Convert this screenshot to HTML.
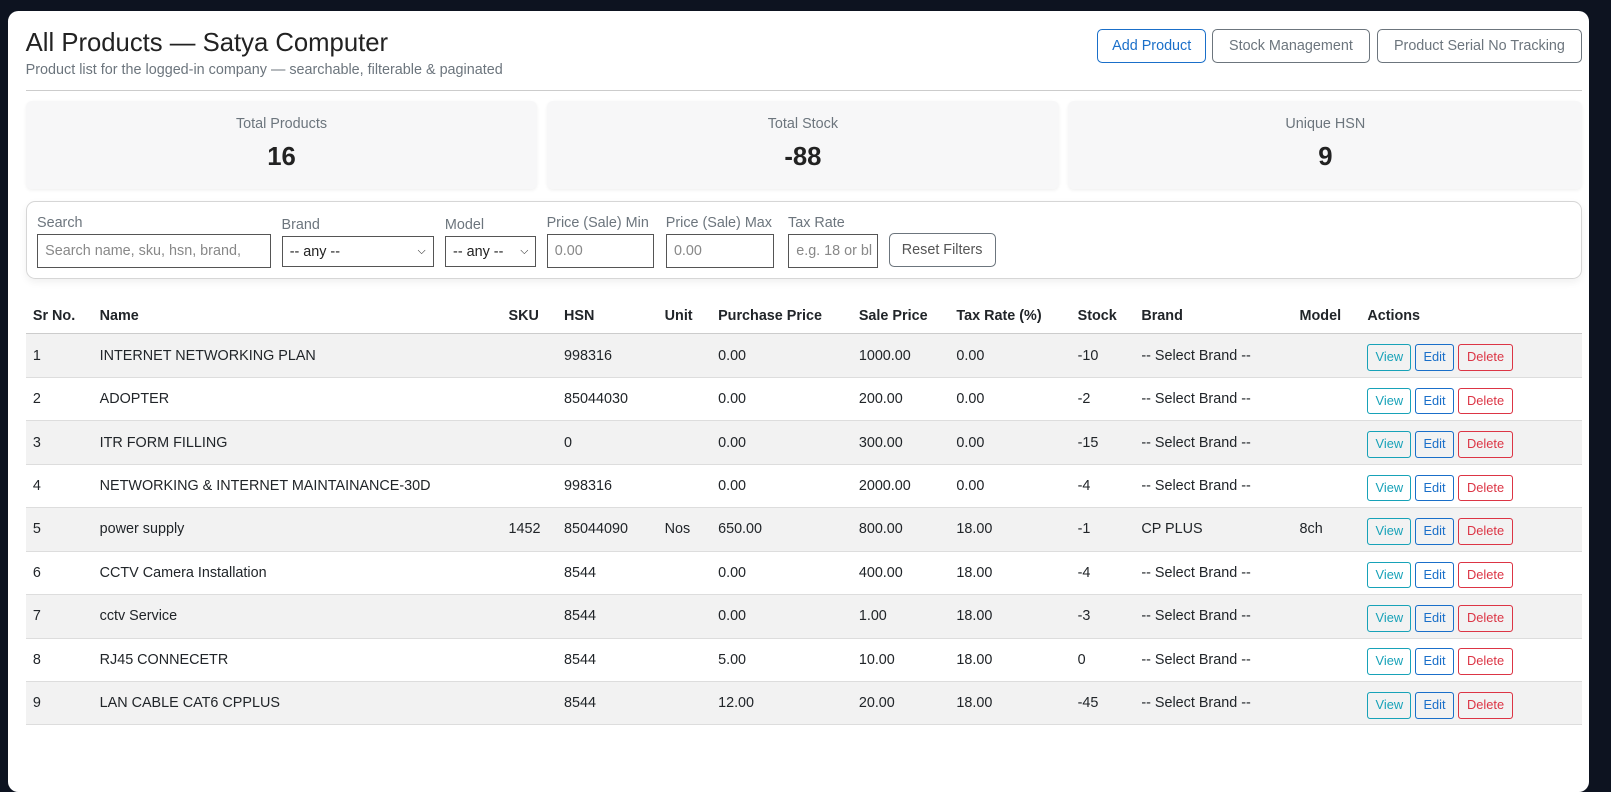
<!DOCTYPE html>
<html><head><meta charset="utf-8"><style>
*{box-sizing:border-box;margin:0;padding:0}
body{width:1611px;height:726px;background:#0d1320;font-family:"Liberation Sans",sans-serif;overflow:hidden;position:relative;color:#212529}
#w{position:absolute;left:0;top:0;width:1568px;height:707px;zoom:1.0274}
.card{position:absolute;left:8px;top:11px;width:1539px;height:760px;background:#fff;border-radius:10px}
.abs{position:absolute}
h1{position:absolute;left:25px;top:28px;font-size:25px;font-weight:400;color:#222}
.sub{left:25px;top:60px;font-size:14px;color:#6c757d}
.btn{position:absolute;top:28px;height:33px;border:1px solid #6c757d;border-radius:5px;font-size:14px;color:#6c757d;display:flex;align-items:center;justify-content:center;background:#fff}
hr{position:absolute;left:25px;top:88px;width:1515px;border:0;border-top:1px solid #ccc}
.stat{position:absolute;top:98px;height:86px;background:#f7f7f8;border-radius:6px;text-align:center;box-shadow:0 1px 3px rgba(0,0,0,.06)}
.stat .l{margin-top:15px;font-size:14px;color:#6c757d}
.stat .v{margin-top:11px;font-size:25px;font-weight:700;color:#222}
.filt{position:absolute;left:25px;top:196px;width:1515px;height:76px;border:1px solid #d6d6d6;border-radius:9px;box-shadow:0 3px 8px rgba(0,0,0,.06)}
.lab{position:absolute;font-size:14px;color:#6c757d}
.in{position:absolute;top:228px;height:33px;border:1px solid #555;font-size:14px;color:#888;padding:0 7px;display:flex;align-items:center;background:#fff}
.sel{color:#222;justify-content:space-between}
table{position:absolute;left:25px;top:290px;width:1515px;border-collapse:collapse;font-size:14px}
th{text-align:left;font-weight:700;height:35px;padding:0 7px;border-bottom:1px solid #ccc}
td{height:42.3px;padding:0 7px;border-bottom:1px solid #ddd;white-space:nowrap}
tr:nth-child(even) td{background:#f2f2f2}
.b{display:inline-block;height:26px;line-height:24px;border:1px solid;border-radius:3px;font-size:12.5px;padding:0 7px;margin-right:0;margin-top:4px}
.v1{color:#17a2b8;border-color:#17a2b8}.e1{color:#1a6fc9;border-color:#1a6fc9}.d1{color:#dc3545;border-color:#dc3545;padding:0 8px}
</style></head><body><div id="w">
<div class="card"></div>
<h1>All Products — Satya Computer</h1>
<div class="abs sub">Product list for the logged-in company — searchable, filterable &amp; paginated</div>
<div class="btn" style="left:1068px;width:106px;color:#1a6fc9;border-color:#1a6fc9">Add Product</div>
<div class="btn" style="left:1180px;width:153px">Stock Management</div>
<div class="btn" style="left:1340px;width:200px">Product Serial No Tracking</div>
<hr>
<div class="stat" style="left:25px;width:498px"><div class="l">Total Products</div><div class="v">16</div></div>
<div class="stat" style="left:532px;width:499px"><div class="l">Total Stock</div><div class="v">-88</div></div>
<div class="stat" style="left:1040px;width:500px"><div class="l">Unique HSN</div><div class="v">9</div></div>
<div class="filt"></div>
<div class="lab" style="left:36px;top:209px">Search</div>
<div class="lab" style="left:274px;top:211px">Brand</div>
<div class="lab" style="left:433px;top:211px">Model</div>
<div class="lab" style="left:532px;top:209px">Price (Sale) Min</div>
<div class="lab" style="left:648px;top:209px">Price (Sale) Max</div>
<div class="lab" style="left:767px;top:209px">Tax Rate</div>
<div class="in" style="left:36px;width:228px">Search name, sku, hsn, brand,</div>
<div class="in sel" style="left:274px;width:148px;top:230px;height:30px"><span>-- any --</span><span style="font-size:10px">&#9013;</span></div>
<div class="in sel" style="left:433px;width:89px;top:230px;height:30px"><span>-- any --</span><span style="font-size:10px">&#9013;</span></div>
<div class="in" style="left:532px;width:105px">0.00</div>
<div class="in" style="left:648px;width:105px">0.00</div>
<div class="in" style="left:767px;width:88px;overflow:hidden;white-space:nowrap">e.g. 18 or bl</div>
<div class="btn" style="left:865px;top:227px;width:104px;height:33px;color:#555">Reset Filters</div>
<table>
<tr><th style="width:65px">Sr No.</th><th style="width:398px">Name</th><th style="width:54px">SKU</th><th style="width:98px">HSN</th><th style="width:52px">Unit</th><th style="width:137px">Purchase Price</th><th style="width:95px">Sale Price</th><th style="width:118px">Tax Rate (%)</th><th style="width:62px">Stock</th><th style="width:154px">Brand</th><th style="width:66px">Model</th><th>Actions</th></tr>
<tr><td>1</td><td>INTERNET NETWORKING PLAN</td><td></td><td>998316</td><td></td><td>0.00</td><td>1000.00</td><td>0.00</td><td>-10</td><td>-- Select Brand --</td><td></td><td><span class="b v1">View</span> <span class="b e1">Edit</span> <span class="b d1">Delete</span></td></tr>
<tr><td>2</td><td>ADOPTER</td><td></td><td>85044030</td><td></td><td>0.00</td><td>200.00</td><td>0.00</td><td>-2</td><td>-- Select Brand --</td><td></td><td><span class="b v1">View</span> <span class="b e1">Edit</span> <span class="b d1">Delete</span></td></tr>
<tr><td>3</td><td>ITR FORM FILLING</td><td></td><td>0</td><td></td><td>0.00</td><td>300.00</td><td>0.00</td><td>-15</td><td>-- Select Brand --</td><td></td><td><span class="b v1">View</span> <span class="b e1">Edit</span> <span class="b d1">Delete</span></td></tr>
<tr><td>4</td><td>NETWORKING &amp; INTERNET MAINTAINANCE-30D</td><td></td><td>998316</td><td></td><td>0.00</td><td>2000.00</td><td>0.00</td><td>-4</td><td>-- Select Brand --</td><td></td><td><span class="b v1">View</span> <span class="b e1">Edit</span> <span class="b d1">Delete</span></td></tr>
<tr><td>5</td><td>power supply</td><td>1452</td><td>85044090</td><td>Nos</td><td>650.00</td><td>800.00</td><td>18.00</td><td>-1</td><td>CP PLUS</td><td>8ch</td><td><span class="b v1">View</span> <span class="b e1">Edit</span> <span class="b d1">Delete</span></td></tr>
<tr><td>6</td><td>CCTV Camera Installation</td><td></td><td>8544</td><td></td><td>0.00</td><td>400.00</td><td>18.00</td><td>-4</td><td>-- Select Brand --</td><td></td><td><span class="b v1">View</span> <span class="b e1">Edit</span> <span class="b d1">Delete</span></td></tr>
<tr><td>7</td><td>cctv Service</td><td></td><td>8544</td><td></td><td>0.00</td><td>1.00</td><td>18.00</td><td>-3</td><td>-- Select Brand --</td><td></td><td><span class="b v1">View</span> <span class="b e1">Edit</span> <span class="b d1">Delete</span></td></tr>
<tr><td>8</td><td>RJ45 CONNECETR</td><td></td><td>8544</td><td></td><td>5.00</td><td>10.00</td><td>18.00</td><td>0</td><td>-- Select Brand --</td><td></td><td><span class="b v1">View</span> <span class="b e1">Edit</span> <span class="b d1">Delete</span></td></tr>
<tr><td>9</td><td>LAN CABLE CAT6 CPPLUS</td><td></td><td>8544</td><td></td><td>12.00</td><td>20.00</td><td>18.00</td><td>-45</td><td>-- Select Brand --</td><td></td><td><span class="b v1">View</span> <span class="b e1">Edit</span> <span class="b d1">Delete</span></td></tr>
</table>
</div></body></html>
